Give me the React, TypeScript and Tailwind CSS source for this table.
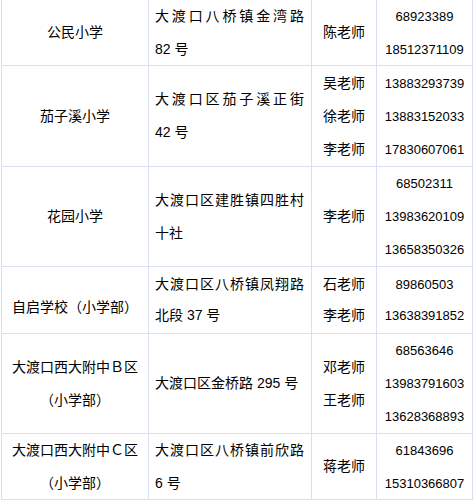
type School = {
  name: string[];
  addr: string[];
  teachers: string[];
  phones: string[];
  lh: string;
  nameClass?: string;
};

const schools: School[] = [
  {
    name: ["公民小学"],
    addr: ["大渡口八桥镇金湾路", "82 号"],
    teachers: ["陈老师"],
    phones: ["68923389", "18512371109"],
    lh: "leading-[33px]",
  },
  {
    name: ["茄子溪小学"],
    addr: ["大渡口区茄子溪正街", "42 号"],
    teachers: ["吴老师", "徐老师", "李老师"],
    phones: ["13883293739", "13883152033", "17830607061"],
    lh: "leading-[33px]",
  },
  {
    name: ["花园小学"],
    addr: ["大渡口区建胜镇四胜村", "十社"],
    teachers: ["李老师"],
    phones: ["68502311", "13983620109", "13658350326"],
    lh: "leading-[33px]",
  },
  {
    name: ["自启学校（小学部）"],
    addr: ["大渡口区八桥镇凤翔路", "北段 37 号"],
    teachers: ["石老师", "李老师"],
    phones: ["89860503", "13638391852"],
    lh: "leading-[31px]",
    nameClass: "pt-[15px]",
  },
  {
    name: ["大渡口西大附中Ｂ区", "（小学部）"],
    addr: ["大渡口区金桥路 295 号"],
    teachers: ["邓老师", "王老师"],
    phones: ["68563646", "13983791603", "13628368893"],
    lh: "leading-[33px]",
  },
  {
    name: ["大渡口西大附中Ｃ区", "（小学部）"],
    addr: ["大渡口区八桥镇前欣路", "6 号"],
    teachers: ["蒋老师"],
    phones: ["61843696", "15310366807"],
    lh: "leading-[33px]",
  },
];

const cell = "bg-white flex flex-col justify-center";

export default function App() {
  return (
    <div className="w-[474px] h-[501px] overflow-hidden bg-white text-black text-[14px] font-['Liberation_Sans','Noto_Sans_CJK_SC',sans-serif]">
      <div className="ml-[1px] -mt-[1px] inline-grid grid-cols-[146px_162px_64px_95px] grid-rows-[65px_100px_99px_66px_99px_65px] gap-[1px] p-[1px] bg-[#d7dff0]">
        {schools.map((s, i) => (
          <div key={i} className="contents">
            <div className={`${cell} text-center ${s.lh} ${s.nameClass ?? ""}`}>
              {s.name.map((line) => (
                <div key={line} className="whitespace-nowrap">
                  {line}
                </div>
              ))}
            </div>
            <div className={`${cell} pl-[6px] pr-[7px] ${s.lh}`}>
              {s.addr.map((line, j) => (
                <div
                  key={line}
                  className={
                    j === 0 && s.addr.length > 1
                      ? "text-justify [text-align-last:justify] whitespace-nowrap"
                      : "whitespace-nowrap"
                  }
                >
                  {line}
                </div>
              ))}
            </div>
            <div className={`${cell} text-center ${s.lh}`}>
              {s.teachers.map((t, j) => (
                <div key={j}>{t}</div>
              ))}
            </div>
            <div className={`${cell} text-center text-[13px] ${s.lh}`}>
              {s.phones.map((p) => (
                <div key={p}>{p}</div>
              ))}
            </div>
          </div>
        ))}
      </div>
    </div>
  );
}
